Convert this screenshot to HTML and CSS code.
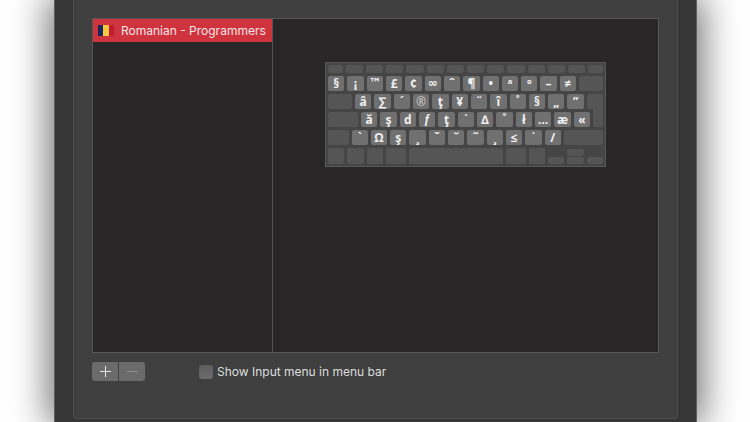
FILE: index.html
```html
<!DOCTYPE html>
<html lang="en">
<head>
  <meta charset="UTF-8">
  <title>Input Sources</title>
  <link rel="stylesheet" href="styles.css">
</head>
<body>

<main class="window">
  <section class="panel">
    <div class="sources">
      <ul class="source-list">
        <li class="source selected">
          <svg class="flag" width="16" height="11" viewBox="0 0 16 11" aria-hidden="true">
            <rect width="5" height="11" fill="#17295d"/>
            <rect x="5" width="6" height="11" fill="#f6c83e"/>
            <rect x="11" width="5" height="11" fill="#c21c31"/>
          </svg>
          <span>Romanian - Programmers</span>
        </li>
      </ul>

      <div class="preview">
        <div class="keyboard">
          <div class="row function-row">
            <i class="edge"></i><i></i><i></i><i></i><i></i><i></i><i></i><i></i><i></i><i></i><i></i><i></i><i></i><i class="edge"></i>
          </div>
          <div class="row">
            <kbd>§</kbd><kbd>¡</kbd><kbd class="symbol">™</kbd><kbd>£</kbd><kbd>¢</kbd><kbd class="symbol">∞</kbd><kbd>ˆ</kbd><kbd>¶</kbd><kbd>•</kbd><kbd>ª</kbd><kbd>º</kbd><kbd>–</kbd><kbd>≠</kbd>
            <i class="delete"></i>
          </div>
          <div class="row">
            <i class="tab"></i>
            <kbd>â</kbd><kbd>∑</kbd><kbd>´</kbd><kbd class="registered">®</kbd><kbd>ţ</kbd><kbd>¥</kbd><kbd>¨</kbd><kbd>î</kbd><kbd>˚</kbd><kbd>§</kbd><kbd>„</kbd><kbd>”</kbd>
            <i class="enter-top"></i>
          </div>
          <div class="row">
            <i class="caps"></i>
            <kbd>ă</kbd><kbd>ş</kbd><kbd>d</kbd><kbd class="florin">ƒ</kbd><kbd>ţ</kbd><kbd>˙</kbd><kbd>∆</kbd><kbd>˚</kbd><kbd>ł</kbd><kbd>…</kbd><kbd>æ</kbd><kbd>«</kbd>
            <i class="enter-bottom"></i>
          </div>
          <div class="row">
            <i class="shift-left"></i>
            <kbd>`</kbd><kbd>Ω</kbd><kbd>ş</kbd><kbd>¸</kbd><kbd>ˇ</kbd><kbd>˘</kbd><kbd>˜</kbd><kbd>¸</kbd><kbd>≤</kbd><kbd>˙</kbd><kbd>/</kbd>
            <i class="shift-right"></i>
          </div>
          <div class="row bottom-row">
            <i></i><i></i><i></i><i class="command"></i><i class="space"></i><i class="command"></i><i></i>
            <div class="arrow"><i></i></div>
            <div class="arrow"><i></i><i></i></div>
            <div class="arrow"><i></i></div>
          </div>
        </div>
      </div>
    </div>

    <div class="controls">
      <div class="segmented">
        <button type="button" aria-label="Add">
          <svg width="13" height="13" viewBox="0 0 13 13"><path d="M1 6.5h11M6.5 1v11"/></svg>
        </button>
        <button type="button" aria-label="Remove" disabled>
          <svg width="13" height="13" viewBox="0 0 13 13"><path d="M1 6.5h11"/></svg>
        </button>
      </div>
      <label class="menu-option">
        <input type="checkbox">
        <span>Show Input menu in menu bar</span>
      </label>
    </div>
  </section>
</main>

</body>
</html>
```

FILE: styles.css
```css
* {
  box-sizing: border-box;
}

body {
  margin: 0;
  background: white;
  color: #dedede;
  font-family: Inter, sans-serif;
  font-size: 12px;
  overflow: hidden;
}

.window {
  display: flex;
  height: 100vh;
  margin: 0 53px 0 54px;
  padding: 0 18px 3px;
  background: #363636;
  border: solid #606060;
  border-width: 0 1px;
  box-shadow: 0 0 36px 4px rgba(0, 0, 0, 0.6);
}

.panel {
  display: flex;
  flex: 1;
  flex-direction: column;
  padding: 18px 18px 0;
  background: #3f3f3f;
  border: 1px solid #4d4d4d;
  border-top: none;
  border-radius: 0 0 4px 4px;
}

.sources {
  display: flex;
  flex: 1;
  background: #282626;
  border: 1px solid #555756;
}

.source-list {
  width: 180px;
  margin: 0;
  padding: 0;
  list-style: none;
  border-right: 1px solid #555756;
}

.source {
  display: flex;
  align-items: center;
  gap: 7px;
  height: 23px;
  padding-left: 5px;
  white-space: nowrap;
}

.source.selected {
  background: #cf343e;
  color: #f8e3e4;
}

.flag {
  flex: none;
}

/* Keyboard layout preview */

.preview {
  flex: 1;
  padding: 43px 52px 0;
}

.keyboard {
  display: flex;
  flex-direction: column;
  gap: 3px;
  padding: 2px;
  background: #454545;
  border: 1px solid #585858;
}

.row {
  display: flex;
  gap: 3px;
  height: 15px;
}

.function-row {
  height: 8px;
}

.bottom-row {
  height: 16px;
}

.row i,
.row kbd {
  flex: 163 1 0;
  min-width: 0;
  border-radius: 2px;
}

.row i {
  background: #555;
}

.row kbd {
  display: flex;
  align-items: center;
  justify-content: center;
  background: #707070;
  color: #f0f0f0;
  font: bold 12px/15px "Open Sans", "Noto Sans", "DejaVu Sans", sans-serif;
}

.row .symbol {
  font-family: "DejaVu Sans", sans-serif;
}

.row .registered {
  color: #d0d0d0;
  font-weight: normal;
}

.row .florin {
  font-family: "Liberation Sans", sans-serif;
}

.row .edge {
  flex-grow: 140;
}

.row .delete,
.row .tab {
  flex-grow: 240;
}

.row .enter-top {
  border-radius: 2px 2px 2px 0;
}

.row .caps {
  flex-grow: 300;
}

.row .enter-bottom {
  flex-grow: 100;
  margin-top: -4px;
  border-radius: 0 0 2px 2px;
}

.row .shift-left {
  flex-grow: 205;
}

.row .shift-right {
  flex-grow: 390;
}

.row .command {
  flex-grow: 200;
}

.row .space {
  flex-grow: 930;
}

.arrow {
  display: flex;
  flex: 163 1 0;
  flex-direction: column;
  justify-content: flex-end;
  gap: 1px;
}

.row .arrow i {
  flex: none;
  height: 7px;
}

/* Controls under the list */

.controls {
  display: flex;
  align-items: flex-start;
  gap: 54px;
  height: 65px;
  padding-top: 9px;
}

.segmented {
  display: flex;
  gap: 1px;
}

.segmented button {
  display: flex;
  align-items: center;
  justify-content: center;
  width: 26px;
  height: 19px;
  padding: 0;
  background: #6b6b6b;
  border: none;
  border-radius: 3px 0 0 3px;
}

.segmented button:last-child {
  border-radius: 0 3px 3px 0;
}

.segmented path {
  fill: none;
  stroke: #e6e6e6;
}

.segmented button:disabled path {
  stroke: #8e8e8e;
}

.menu-option {
  display: flex;
  align-items: center;
  gap: 4px;
  height: 19px;
}

.menu-option input {
  appearance: none;
  width: 14px;
  height: 14px;
  margin: 0;
  background: linear-gradient(#5c5c5c, #6c6c6c);
  border-radius: 3px;
}
```
